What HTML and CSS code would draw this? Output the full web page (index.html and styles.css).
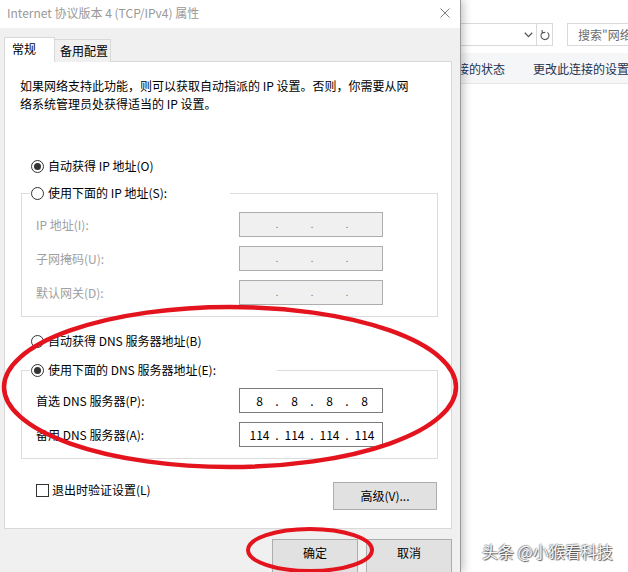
FILE: index.html
```html
<!DOCTYPE html>
<html lang="zh-CN">
<head>
<meta charset="utf-8">
<title>Internet 协议版本 4 (TCP/IPv4) 属性</title>
<link rel="stylesheet" href="styles.css">
</head>
<body>
<div class="dialog">
  <div class="titlebar">
    <span class="title">Internet 协议版本 4 (TCP/IPv4) 属性</span>
    <svg class="close" width="10" height="10" viewBox="0 0 10 10"><path d="M0.5 0.5L9.5 9.5M9.5 0.5L0.5 9.5" stroke="#7f7f7f" stroke-width="1" fill="none"/></svg>
  </div>
  <div class="content">
    <div class="tabs">
      <div class="tab tab-active">常规</div>
      <div class="tab">备用配置</div>
    </div>
    <div class="panel">
      <p class="desc">如果网络支持此功能，则可以获取自动指派的 IP 设置。否则，你需要从网<br>络系统管理员处获得适当的 IP 设置。</p>
      <div class="radio-row first"><span class="radio checked"></span><span>自动获得 IP 地址(O)</span></div>
      <fieldset class="group group-ip">
        <legend class="legend legend-ip"><span class="legend-inner"><span class="radio"></span><span>使用下面的 IP 地址(S):</span></span></legend>
        <div class="field disabled"><span class="label">IP 地址(I):</span><div class="ipbox"><span class="oct"></span><span class="dot">.</span><span class="oct"></span><span class="dot">.</span><span class="oct"></span><span class="dot">.</span><span class="oct"></span></div></div>
        <div class="field disabled"><span class="label">子网掩码(U):</span><div class="ipbox"><span class="oct"></span><span class="dot">.</span><span class="oct"></span><span class="dot">.</span><span class="oct"></span><span class="dot">.</span><span class="oct"></span></div></div>
        <div class="field disabled"><span class="label">默认网关(D):</span><div class="ipbox"><span class="oct"></span><span class="dot">.</span><span class="oct"></span><span class="dot">.</span><span class="oct"></span><span class="dot">.</span><span class="oct"></span></div></div>
      </fieldset>
      <div class="radio-row dns-auto"><span class="radio"></span><span>自动获得 DNS 服务器地址(B)</span></div>
      <fieldset class="group group-dns">
        <legend class="legend legend-dns"><span class="legend-inner"><span class="radio checked"></span><span>使用下面的 DNS 服务器地址(E):</span></span></legend>
        <div class="field"><span class="label">首选 DNS 服务器(P):</span><div class="ipbox"><span class="oct">8</span><span class="dot">.</span><span class="oct">8</span><span class="dot">.</span><span class="oct">8</span><span class="dot">.</span><span class="oct">8</span></div></div>
        <div class="field"><span class="label">备用 DNS 服务器(A):</span><div class="ipbox"><span class="oct">114</span><span class="dot">.</span><span class="oct">114</span><span class="dot">.</span><span class="oct">114</span><span class="dot">.</span><span class="oct">114</span></div></div>
      </fieldset>
      <div class="bottom-row">
        <div class="check-row"><span class="checkbox"></span><span>退出时验证设置(L)</span></div>
        <button class="btn btn-adv">高级(V)...</button>
      </div>
    </div>
    <div class="actions">
      <button class="btn btn-foot">确定</button>
      <button class="btn btn-foot">取消</button>
    </div>
  </div>
</div>
<div class="explorer">
  <div class="addr">
    <div class="combo">
      <span class="combo-arrow"><svg width="9" height="6" viewBox="0 0 9 6"><path d="M0.8 0.8L4.5 4.6L8.2 0.8" stroke="#555" stroke-width="1.3" fill="none"/></svg></span>
      <span class="combo-refresh"><svg width="10" height="12" viewBox="0 0 10 12"><path d="M7.4 3.4A4 4 0 1 1 2.3 3.6" stroke="#555" stroke-width="1.1" fill="none"/><path d="M2 1L2.4 3.9L5.3 3.4" stroke="#555" stroke-width="1.1" fill="none"/></svg></span>
    </div>
    <div class="search">搜索"网络和 Internet"</div>
  </div>
  <div class="toolbar">
    <span class="tool tool1">接的状态</span>
    <span class="tool tool2">更改此连接的设置</span>
  </div>
</div>
<svg class="marks" width="628" height="572" viewBox="0 0 628 572">
  <ellipse cx="230" cy="387" rx="226" ry="80" fill="none" stroke="#e3141e" stroke-width="4.5"/>
  <ellipse cx="310" cy="550" rx="62" ry="21" fill="none" stroke="#e3141e" stroke-width="4"/>
</svg>
<div class="watermark">头条 @小猴看科技</div>
</body>
</html>
```
FILE: styles.css
```css
* { box-sizing: border-box; }
html, body { margin: 0; padding: 0; }
body {
  width: 628px;
  height: 572px;
  overflow: hidden;
  display: flex;
  align-items: flex-start;
  position: relative;
  background: #fff;
  font-family: "Noto Sans CJK SC", "Noto Sans", sans-serif;
  font-size: 12px;
  line-height: 18px;
  color: #000;
}

/* dialog */
.dialog {
  width: 461px;
  height: 572px;
  flex: none;
  overflow: hidden;
  background: #f0f0f0;
  border-right: 1px solid #9a9a9a;
  box-shadow: 3px 0 8px rgba(0, 0, 0, 0.22);
  position: relative;
  z-index: 1;
}
.titlebar {
  height: 28px;
  background: #fff;
  display: flex;
  align-items: center;
  justify-content: space-between;
  padding: 0 10px 2px 7px;
}
.title { color: #999; white-space: nowrap; }
.close { display: block; }

.content { padding: 9px 8px 0 4px; }
.tabs {
  display: flex;
  align-items: flex-end;
  height: 25px;
}
.tab {
  height: 23px;
  width: 56px;
  padding-left: 5px;
  border: 1px solid #d9d9d9;
  border-left: none;
  border-bottom: none;
  background: #f0f0f0;
  display: flex;
  align-items: center;
  white-space: nowrap;
}
.tab-active {
  height: 25px;
  width: 51px;
  padding-left: 7px;
  padding-bottom: 3px;
  border-left: 1px solid #d9d9d9;
  background: #fff;
  position: relative;
  z-index: 1;
}
.panel {
  width: 448px;
  height: 468px;
  margin-top: -1px;
  background: #fff;
  border: 1px solid #d9d9d9;
  padding: 15px 0 0 15px;
}
.desc { margin: 0; white-space: nowrap; }

.radio-row, .legend-inner, .check-row {
  display: flex;
  align-items: center;
  height: 18px;
  gap: 4px;
  white-space: nowrap;
}
.radio-row { margin-left: 11px; }
.first { margin-top: 44px; }
.dns-auto { margin-top: 15px; }
.radio {
  width: 13px;
  height: 13px;
  flex: none;
  border: 1px solid #333;
  border-radius: 50%;
  background: #fff;
  display: flex;
  align-items: center;
  justify-content: center;
}
.radio.checked::after {
  content: "";
  width: 7px;
  height: 7px;
  border-radius: 50%;
  background: #333;
}

.group {
  margin: 9px 0 0 1px;
  width: 417px;
  min-width: 0;
  padding: 10px 0 11px 0;
  border: 1px solid #dcdcdc;
}
.group-dns { margin-top: 11px; padding-top: 9px; }
.legend {
  padding: 0 0 0 1px;
  margin-left: 8px;
  height: 18px;
}
.legend-ip { width: 200px; }
.legend-dns { width: 247px; }

.field {
  display: flex;
  align-items: center;
  height: 25px;
  margin-left: 14px;
}
.field + .field { margin-top: 9px; }
.label { width: 203px; flex: none; white-space: nowrap; }
.ipbox {
  width: 144px;
  height: 25px;
  border: 1px solid #7a7a7a;
  background: #fff;
  display: flex;
  align-items: center;
  padding-left: 6px;
}
.oct { width: 27px; text-align: center; }
.dot { width: 8px; text-align: center; }
.disabled .label { color: #a0a0a0; }
.disabled .ipbox { background: #f0f0f0; border-color: #adadad; }
.disabled .dot { color: #777; font-size: 9px; }

.bottom-row {
  width: 417px;
  height: 28px;
  margin-top: 23px;
  display: flex;
  align-items: flex-start;
  justify-content: space-between;
}
.check-row { margin-left: 16px; margin-top: -1px; gap: 3px; }
.checkbox {
  width: 13px;
  height: 13px;
  border: 1px solid #333;
  background: #fff;
  flex: none;
}
.btn {
  font: inherit;
  color: #000;
  background: #e1e1e1;
  border: 1px solid #adadad;
  margin: 0;
  padding: 0;
  cursor: default;
}
.btn-adv { width: 104px; height: 28px; }

.actions {
  display: flex;
  justify-content: flex-end;
  gap: 8px;
  padding-top: 10px;
}
.btn-foot {
  width: 86px;
  height: 40px;
  flex: none;
  display: flex;
  justify-content: center;
  align-items: flex-start;
  padding-top: 4px;
}

/* background explorer window */
.explorer {
  flex: 1;
  min-width: 0;
  display: flex;
  flex-direction: column;
  background: #fff;
}
.addr {
  display: flex;
  height: 23px;
  margin-top: 23px;
}
.combo {
  width: 92px;
  flex: none;
  border: 1px solid #d9d9d9;
  border-left: none;
  display: flex;
  justify-content: flex-end;
}
.combo-arrow {
  width: 17px;
  display: flex;
  align-items: center;
  justify-content: center;
  border-right: 1px solid #d9d9d9;
}
.combo-refresh {
  width: 15px;
  display: flex;
  align-items: center;
  justify-content: center;
}
.search {
  flex: 1;
  min-width: 0;
  margin-left: 14px;
  border: 1px solid #d9d9d9;
  border-right: none;
  padding-left: 10px;
  line-height: 21px;
  color: #6d6d6d;
  white-space: nowrap;
  overflow: hidden;
}
.toolbar {
  margin-top: 7px;
  height: 31px;
  background: #f5f6f8;
  border-bottom: 1px solid #e6e6e6;
  display: flex;
  align-items: center;
  padding-top: 1px;
  color: #1e3250;
  white-space: nowrap;
}
.tool1 { margin-left: -4px; }
.tool2 { margin-left: 28px; }

/* overlays */
.marks {
  position: absolute;
  left: 0;
  top: 0;
  z-index: 3;
  pointer-events: none;
}
.watermark {
  position: absolute;
  left: 482px;
  top: 541px;
  z-index: 4;
  font-size: 16px;
  line-height: 20px;
  color: #f6f6f6;
  white-space: nowrap;
  text-shadow: 1px 1px 1px rgba(0, 0, 0, 0.65), -1px 0 1px rgba(0, 0, 0, 0.35), 0 -1px 1px rgba(0, 0, 0, 0.3);
}
```
